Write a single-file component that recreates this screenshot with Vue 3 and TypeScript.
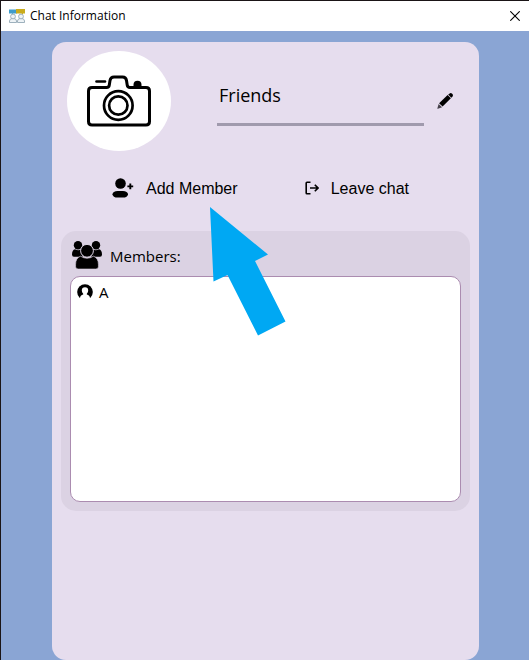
<script setup lang="ts">
import { ref } from 'vue'

interface Member {
  id: number
  name: string
}

const chatName = ref<string>('Friends')
const members = ref<Member[]>([{ id: 1, name: 'A' }])
</script>

<template>
  <div class="window">
    <header class="titlebar">
      <svg class="app-icon" viewBox="0 0 16 14" aria-hidden="true">
        <path d="M0 .5h8V4.500H4L3 5.500v-1H0z" fill="#3f9ccb" />
        <path d="M7 0h9v4.500h-2V6l-1.500-1.500H7z" fill="#c9ab1c" />
        <g fill="#eef3f6" stroke="#94a8b5" stroke-width=".9">
          <path d="M.5 13.500v-1.500q0-2 2.500-2.500h2q2.500.5 2.500 2.500v1.500z" />
          <path d="M8.500 13.500v-1.500q0-2 2.500-2.500h2q2.500.5 2.500 2.500v1.500z" />
          <circle cx="4" cy="7.500" r="2.400" />
          <circle cx="12" cy="7.500" r="2.400" />
        </g>
      </svg>
      <h1 class="title">Chat Information</h1>
      <button class="close" type="button" aria-label="Close">
        <svg viewBox="0 0 10 10" aria-hidden="true">
          <path d="M.3.3l9.400 9.400M9.700.3L.3 9.700" stroke="#000" stroke-width="1.100" />
        </svg>
      </button>
    </header>

    <main class="body">
      <section class="card">
        <div class="profile">
          <button class="avatar" type="button" aria-label="Change chat picture">
            <svg viewBox="0 0 64 52" fill="none" stroke="#000" stroke-width="3" stroke-linecap="round" stroke-linejoin="round" aria-hidden="true">
              <path d="M5 12.500H19.500Q22 12.500 22.300 10L23 5.500Q23.600 2 27 2H35.500Q39 2 39.500 5.500L40.200 10Q40.600 12.500 43 12.500H59Q62.500 12.500 62.500 16V46.500Q62.500 50 59 50H5Q1.500 50 1.500 46.500V16Q1.500 12.500 5 12.500Z" />
              <path d="M9.500 6.500H18" stroke-width="2.600" />
              <path d="M46.500 11V9.800a4 4 0 0 1 8 0V11z" fill="#000" stroke="none" />
              <circle cx="31.300" cy="30.500" r="14.300" stroke-width="2.700" />
              <circle cx="31.300" cy="30.500" r="9.200" stroke-width="2.700" />
            </svg>
          </button>
          <input v-model="chatName" class="name" type="text" aria-label="Chat name" />
          <button class="edit" type="button" aria-label="Edit chat name">
            <svg viewBox="0 0 16 16" aria-hidden="true">
              <path d="M11.200 1.600L12.700.4q1.200-.8 2.500.4t.4 2.600L14.300 4.800z" />
              <path d="M10.600 2.100l3.300 3.200-8.300 8.300-3.500-3.300z" />
              <path d="M1.600 10.900l3.500 3.300-4.200 1.500q-.6.100-.5-.5z" fill="#45404a" />
            </svg>
          </button>
        </div>

        <div class="actions">
          <button class="action" type="button">
            <svg class="icon-add" viewBox="0 0 22 20" aria-hidden="true">
              <circle cx="8.500" cy="5.500" r="5.300" />
              <rect x=".5" y="13" width="15.500" height="6.600" rx="5" ry="3.300" />
              <path d="M18.300 5.500v5.800M15.400 8.400h5.800" stroke="#000" stroke-width="1.900" />
            </svg>
            <span class="label">Add Member</span>
          </button>
          <button class="action" type="button">
            <svg class="icon-leave" viewBox="0 0 14 14" fill="none" stroke="#000" stroke-width="1.600" aria-hidden="true">
              <path d="M5.500 1.200H2Q1.200 1.200 1.200 2v10q0 .8.800.8h3.500" />
              <path d="M5 7h8M9.800 3.800L13 7l-3.200 3.200" />
            </svg>
            <span class="label">Leave chat</span>
          </button>
        </div>

        <section class="panel">
          <h2 class="panel-title">
            <svg viewBox="0 0 30 28" aria-hidden="true">
              <circle cx="6" cy="4.200" r="4.200" />
              <circle cx="24" cy="4.200" r="4.200" />
              <path d="M0 13.500Q0 9 3 8.300q3 1.500 6 .3 0 4.500 2 7.200H2Q0 15.800 0 13.500z" />
              <path d="M30 13.500q0-4.500-3-5.200-3 1.500-6 .3 0 4.500-2 7.200h9q2 0 2-2.300z" />
              <circle cx="15" cy="9.800" r="6.400" stroke="#dbd2e3" stroke-width="1" />
              <path d="M8.500 15.200q6.500 4.200 13 0 4.900 1.800 4.900 8.300v2q0 2.500-2.500 2.500H6.100q-2.500 0-2.500-2.500v-2q0-6.500 4.900-8.300z" stroke="#dbd2e3" stroke-width=".6" />
            </svg>
            <span class="label">Members:</span>
          </h2>
          <ul class="members">
            <li v-for="member in members" :key="member.id" class="member">
              <svg viewBox="0 0 16 16" aria-hidden="true">
                <circle cx="8" cy="8" r="7.800" />
                <path d="M8 3.300a3.200 3.200 0 0 1 3.200 3.200q0 2-1.400 3.200v.8q3 .8 3.200 3.500V16H3v-2q.2-2.700 3.200-3.500v-.8Q4.800 8.500 4.800 6.500A3.200 3.200 0 0 1 8 3.300z" fill="#fff" />
              </svg>
              <span>{{ member.name }}</span>
            </li>
          </ul>
        </section>

        <svg class="pointer" viewBox="0 0 76 128" aria-hidden="true">
          <path d="M0 0L58 47.500 45 54 75.500 114.500 48 128.500 17.500 68 3.500 74.500z" fill="#00a8f3" />
        </svg>
      </section>
    </main>
  </div>
</template>

<style>
body {
  margin: 0;
  background: #8aa5d4;
}
</style>

<style scoped>
* {
  box-sizing: border-box;
}

.window {
  display: flex;
  flex-direction: column;
  min-height: 100vh;
  border-top: 1px solid #1a1416;
  border-left: 1px solid #1a1416;
  background: #8aa5d4;
  color: #000;
  font-family: "Segoe UI", "Open Sans", "Noto Sans", sans-serif;
}

button {
  padding: 0;
  border: 0;
  background: none;
  color: inherit;
  cursor: pointer;
}

svg {
  display: block;
  flex: none;
}

.titlebar {
  display: flex;
  align-items: center;
  height: 30px;
  padding: 0 8px;
  gap: 5px;
  background: #fff;
}

.app-icon {
  width: 16px;
  height: 14px;
}

.title {
  margin: 0;
  font-size: 12px;
  font-weight: 400;
  line-height: 16px;
}

.close {
  display: grid;
  place-items: center;
  width: 12px;
  height: 16px;
  margin-left: auto;
}

.close svg {
  width: 10px;
  height: 10px;
}

.body {
  display: flex;
  flex: 1;
  padding: 11px 50px 0 51px;
}

.card {
  position: relative;
  flex: 1;
  min-width: 0;
  padding: 9px;
  border-radius: 14px;
  background: #e6ddee;
}

.profile {
  display: flex;
  align-items: center;
  padding: 0 17px 0 6px;
}

.avatar {
  display: grid;
  place-items: center;
  flex: none;
  width: 104px;
  height: 100px;
  margin-right: 46px;
  border-radius: 50%;
  background: #fff;
}

.avatar svg {
  width: 64px;
  height: 52px;
}

.name {
  flex: 1;
  min-width: 0;
  height: 50px;
  margin-right: 13px;
  padding: 0 2px 10px;
  border: 0;
  border-bottom: 3px solid #a09aad;
  background: none;
  color: inherit;
  font-family: inherit;
  font-size: 18px;
  outline: none;
}

.edit svg {
  width: 16px;
  height: 16px;
}

.actions {
  display: flex;
  justify-content: space-between;
  padding: 25px 61px 0 51px;
}

.action {
  display: flex;
  align-items: center;
  gap: 12px;
  height: 24px;
  font-family: Arial, "Liberation Sans", sans-serif;
  font-size: 16px;
}

.label {
  padding-top: 2px;
}

.icon-add {
  width: 22px;
  height: 20px;
}

.icon-leave {
  width: 14px;
  height: 14px;
}

.panel {
  margin-top: 31px;
  padding: 9px;
  border-radius: 15px;
  background: #dbd2e3;
}

.panel-title {
  display: flex;
  align-items: center;
  gap: 8px;
  height: 30px;
  margin: 0 0 6px;
  padding-left: 2px;
  font-size: 15px;
  font-weight: 400;
}

.panel-title svg {
  width: 30px;
  height: 28px;
}

.members {
  min-height: 226px;
  margin: 0;
  padding: 4px 6px;
  border: 1px solid #ab8cb0;
  border-radius: 10px;
  background: #fff;
  list-style: none;
}

.member {
  display: flex;
  align-items: center;
  gap: 6px;
  font-size: 15px;
  line-height: 22px;
}

.member svg {
  width: 16px;
  height: 16px;
}

.pointer {
  position: absolute;
  top: 165px;
  left: 158px;
  width: 76px;
  height: 128px;
  overflow: visible;
  pointer-events: none;
}
</style>
